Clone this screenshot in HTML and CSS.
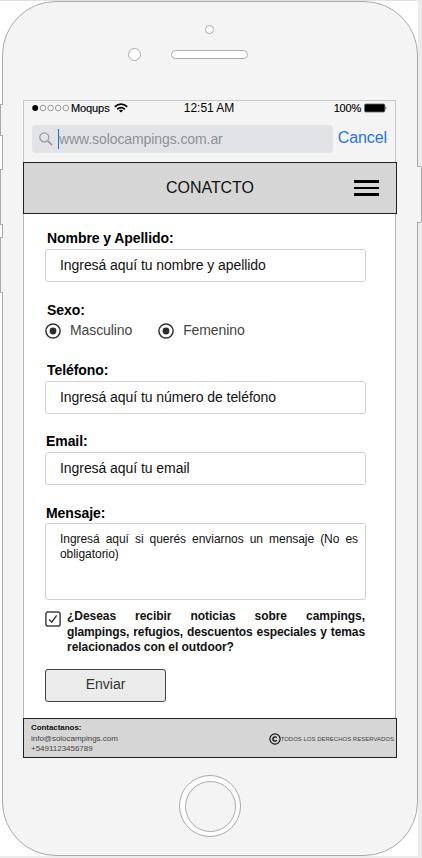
FILE: index.html
```html
<!DOCTYPE html>
<html lang="es">
<head>
<meta charset="utf-8">
<title>Contacto</title>
<link rel="stylesheet" href="styles.css">
</head>
<body>
<div class="canvas">
<div class="phone">
  <span class="side mute"></span>
  <span class="side vol-up"></span>
  <span class="side vol-down"></span>
  <span class="side power"></span>
  <div class="bezel-top">
    <span class="sensor"></span>
    <div class="speaker-row"><span class="camera"></span><span class="speaker"></span></div>
  </div>
  <div class="screen">
    <div class="status">
      <div class="carrier">
        <svg width="38" height="8" viewBox="0 0 38 8"><circle cx="3.2" cy="4" r="3" fill="#000"/><g fill="none" stroke="#777" stroke-width=".7"><circle cx="11" cy="4" r="2.8"/><circle cx="18.6" cy="4" r="2.8"/><circle cx="26.2" cy="4" r="2.8"/><circle cx="33.8" cy="4" r="2.8"/></g></svg>
        <span class="name">Moqups</span>
        <svg class="wifi" width="14" height="10" viewBox="0 0 14 10"><g fill="none" stroke="#000" stroke-width="1.8"><path d="M.8 3.8Q7-1.6 13.2 3.8"/><path d="M3.2 6.3Q7 3 10.8 6.3"/></g><path d="M4.9 7.6Q7 5.9 9.1 7.6L7 9.6Z"/></svg>
      </div>
      <span class="time">12:51 AM</span>
      <div class="power-level">
        <span>100%</span>
        <svg width="23" height="10" viewBox="0 0 23 10"><rect x=".5" y=".9" width="20.4" height="8.2" rx="1.4" fill="#000" stroke="#777" stroke-width=".8"/><path d="M21.6 3.2q1.4 1.8 0 3.6z"/></svg>
      </div>
    </div>
    <div class="search-row">
      <div class="search">
        <svg width="14" height="14" viewBox="0 0 14 14" fill="none" stroke="#999b9f" stroke-width="1.3"><circle cx="5.3" cy="5.3" r="4.5"/><path d="M8.6 8.6l4.5 4.5" stroke-width="1.7"/></svg>
        <span class="caret"></span><span class="url">www.solocampings.com.ar</span>
      </div>
      <span class="cancel">Cancel</span>
    </div>
    <header class="header">
      <span class="title">CONATCTO</span>
      <span class="menu"><i></i><i></i><i></i></span>
    </header>
    <main class="form">
      <div class="field first">
        <div class="label">Nombre y Apellido:</div>
        <div class="input">Ingresá aquí tu nombre y apellido</div>
      </div>
      <div class="field gender">
        <div class="label">Sexo:</div>
        <div class="radios">
          <div class="radio"><svg width="16" height="16" viewBox="0 0 16 16"><circle cx="8" cy="8" r="7.1" fill="none" stroke="#333" stroke-width="1.5"/><circle cx="8" cy="8" r="3.4" fill="#2b2b2b"/></svg><span>Masculino</span></div>
          <div class="radio"><svg width="16" height="16" viewBox="0 0 16 16"><circle cx="8" cy="8" r="7.1" fill="none" stroke="#333" stroke-width="1.5"/><circle cx="8" cy="8" r="3.4" fill="#2b2b2b"/></svg><span>Femenino</span></div>
        </div>
      </div>
      <div class="field phone-field">
        <div class="label">Teléfono:</div>
        <div class="input">Ingresá aquí tu número de teléfono</div>
      </div>
      <div class="field email-field">
        <div class="label">Email:</div>
        <div class="input">Ingresá aquí tu email</div>
      </div>
      <div class="field">
        <div class="label message-label">Mensaje:</div>
        <div class="textarea">Ingresá aquí si querés enviarnos un mensaje (No es obligatorio)</div>
      </div>
      <div class="subscribe">
        <svg width="16" height="16" viewBox="0 0 16 16" fill="none"><rect x=".9" y=".9" width="14.2" height="14.2" rx="2.2" stroke="#444" stroke-width="1.5"/><path d="M4.2 8.4l2.6 2.8L11.6 4.4" stroke="#333" stroke-width="1.4"/></svg>
        <p><span class="line">¿Deseas recibir noticias sobre campings, </span><span class="line tight">glampings, refugios, descuentos especiales y temas </span><span>relacionados con el outdoor?</span></p>
      </div>
      <div class="button">Enviar</div>
    </main>
    <footer class="footer">
      <div class="contact"><b>Contactanos:</b><span>info@solocampings.com</span><span>+5491123456789</span></div>
      <div class="rights">
        <svg width="12" height="12" viewBox="0 0 12 12" fill="none" stroke="#111"><circle cx="6" cy="6" r="5.1" stroke-width="1.2"/><path d="M7.8 4.9A2.1 2.1 0 1 0 7.8 7.1" stroke-width="1.4"/></svg>
        <span>TODOS LOS DERECHOS RESERVADOS</span>
      </div>
    </footer>
  </div>
  <div class="home"><span></span></div>
</div>
</div>
</body>
</html>
```

FILE: styles.css
```css
* { box-sizing: border-box; }
body { margin: 0; background: #ebebeb; font-family: "Liberation Sans", Arial, sans-serif; color: #111; }
svg { display: block; flex: none; }
.canvas { width: 418px; height: 856px; padding-left: 2px; background: #fff; border-top: 1px solid #e2e2e2; }
.phone { position: relative; width: 416px; height: 855px; border: 1px solid #aaa8aa; border-radius: 54px; background: #f5f4f5; padding-left: 20px; }

.side { position: absolute; left: -3px; width: 3px; background: #f5f4f5; border: 1px solid #aaa; border-right: 0; }
.mute { top: 102px; height: 32px; }
.vol-up { top: 167px; height: 56px; }
.vol-down { top: 235px; height: 56px; }
.power { left: 414px; top: 164px; width: 5px; height: 57px; border: 1px solid #aaa; border-left: 0; border-radius: 0 2px 2px 0; }

.bezel-top { height: 98px; padding-top: 23px; }
.sensor { display: block; width: 9px; height: 9px; margin-left: 182px; border: 1px solid #aaa; border-radius: 50%; background: #fff; }
.speaker-row { display: flex; align-items: center; gap: 30px; margin: 14px 0 0 105px; }
.camera { width: 13px; height: 13px; border: 1px solid #aaa; border-radius: 50%; background: #fff; }
.speaker { width: 77px; height: 9px; border: 1px solid #aaa; border-radius: 5px; background: #fff; }

.screen { width: 373px; height: 658px; display: flex; flex-direction: column; }
.status { display: grid; grid-template-columns: 1fr auto 1fr; align-items: center; height: 16px; padding: 0 8px 1px; border: 1px solid #c8c8c8; border-bottom: 0; font-size: 11px; color: #000; }
.carrier { display: flex; align-items: center; }
.name { margin-left: 1px; letter-spacing: -.1px; -webkit-text-stroke: .15px #000; }
.wifi { margin-left: 4px; }
.time { padding-right: 1px; font-size: 12px; letter-spacing: -.05px; }
.power-level { display: flex; justify-content: flex-end; align-items: center; gap: 3px; letter-spacing: -.2px; -webkit-text-stroke: .15px #000; }
.search-row { display: flex; height: 46px; padding: 9px 8px 0; border: solid #c8c8c8; border-width: 0 1px; }
.search { display: flex; align-items: center; width: 301px; height: 28px; padding-left: 7px; border-radius: 4px; background: #e1e3e7; }
.caret { width: 1px; height: 20px; margin-left: 5px; background: #1e6fe0; }
.url { font-size: 14px; letter-spacing: -.09px; color: #8e9094; }
.cancel { margin: 3px 0 0 5px; font-size: 16px; line-height: 20px; letter-spacing: -.1px; color: #2672e8; }
.header { display: grid; grid-template-columns: 1fr auto 1fr; align-items: center; width: 374px; height: 52px; padding: 0 17px; background: #d6d6d6; border: 1px solid #222; }
.title { grid-column: 2; font-size: 16px; letter-spacing: -.05px; }
.menu { justify-self: end; display: flex; flex-direction: column; gap: 4px; width: 25px; }
.menu i { height: 2.6px; background: #000; }

.form { height: 504px; padding: 16px 29px 0 21px; background: #fff; border: solid #b8b8b8; border-width: 0 1px; }
.field { margin-top: 20px; }
.field.first { margin-top: 0; }
.label { height: 19px; padding-left: 2px; font-size: 14px; font-weight: bold; line-height: 17px; letter-spacing: -.07px; color: #000; }
.input { width: 321px; height: 33px; padding-left: 14px; border: 1px solid #d0d0d0; border-radius: 3px; font-size: 14px; line-height: 31px; letter-spacing: -.06px; }
.radios { display: flex; gap: 26px; margin-top: 2px; color: #444; font-size: 14px; letter-spacing: -.1px; }
.radio { display: flex; align-items: center; gap: 9px; height: 16px; }
.radio span { margin-top: -2px; }
.phone-field { margin-top: 23px; }
.email-field { margin-top: 19px; }
.email-field .label, .message-label { padding-left: 1px; }
.message-label { height: 18px; }
.textarea { width: 321px; height: 77px; padding: 8px 7px 0 14px; border: 1px solid #d0d0d0; border-radius: 3px; font-size: 12px; line-height: 15px; text-align: justify; letter-spacing: -.05px; }
.subscribe { display: flex; gap: 6px; height: 55px; margin-top: 8px; }
.subscribe svg { margin-top: 3px; }
.subscribe p { width: 298px; margin: 1px 0 0; font-size: 12px; font-weight: bold; line-height: 15.5px; letter-spacing: -.04px; color: #111; }
.line { display: block; text-align: justify; text-align-last: justify; }
.tight { letter-spacing: -.11px; word-spacing: -.5px; }
.button { width: 121px; height: 33px; margin-top: 6px; border: 1px solid #444; border-radius: 3px; background: #ebebeb; color: #333; font-size: 14px; line-height: 29px; text-align: center; }
.footer { display: flex; justify-content: space-between; align-items: center; flex: 1; width: 374px; padding: 2px 2px 0 7px; background: #d6d6d6; border: 1px solid #222; }
.contact { display: flex; flex-direction: column; font-size: 8px; line-height: 10.5px; letter-spacing: -.02px; color: #444; }
.contact b { color: #111; letter-spacing: -.06px; }
.rights { display: flex; align-items: center; font-size: 6px; color: #444; }
.home { display: grid; place-items: center; width: 62px; height: 62px; margin: 17px 0 0 156px; border: 1px solid #aaa; border-radius: 50%; background: #fff; }
.home span { width: 51px; height: 51px; border: 1px solid #aaa; border-radius: 50%; background: #f5f4f5; }
```
